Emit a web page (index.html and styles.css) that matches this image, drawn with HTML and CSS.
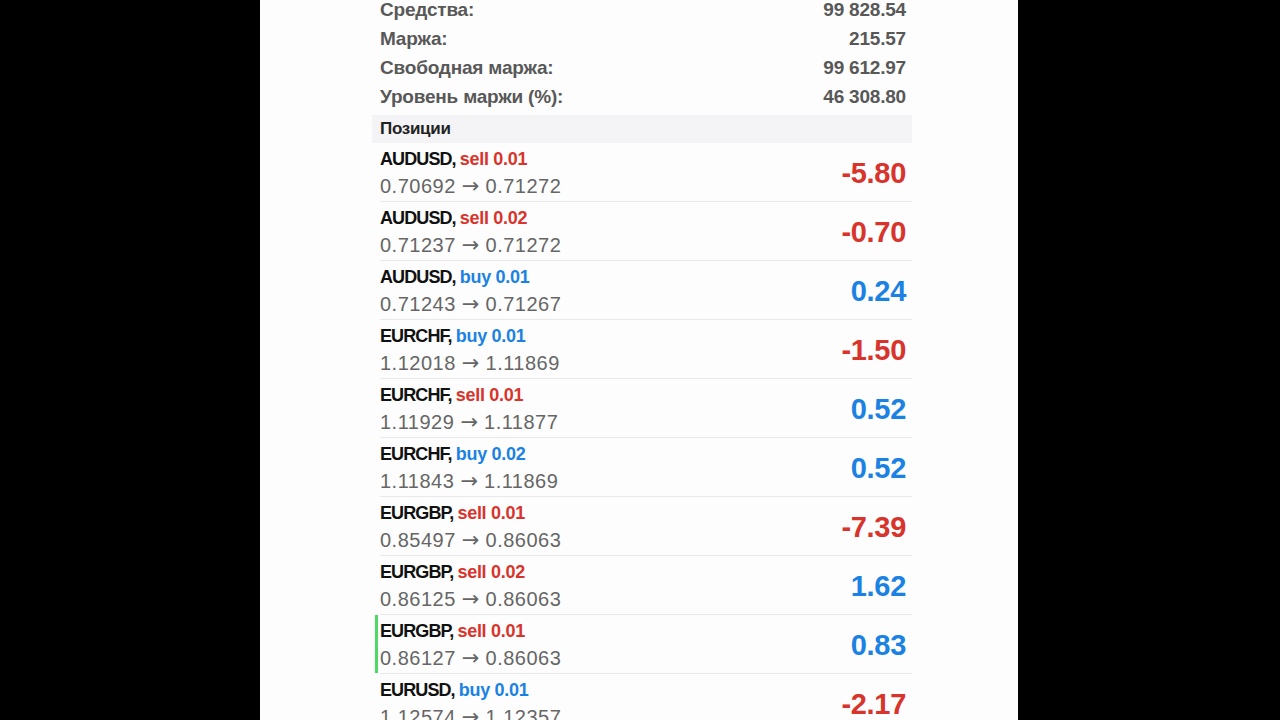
FILE: index.html
```html
<!DOCTYPE html>
<html lang="ru">
<head>
    <meta charset="UTF-8">
    <meta name="viewport" content="width=device-width, initial-scale=1.0">
    <title>Торговля</title>
    <link rel="stylesheet" href="styles.css">
</head>
<body>

    <div class="screen">

        <!-- Состояние счёта -->
        <div class="account">
            <div class="line"><span>Средства:</span><span>99 828.54</span></div>
            <div class="line"><span>Маржа:</span><span>215.57</span></div>
            <div class="line"><span>Свободная маржа:</span><span>99 612.97</span></div>
            <div class="line"><span>Уровень маржи (%):</span><span>46 308.80</span></div>
        </div>

        <div class="positions">
            <div class="section-title">Позиции</div>

            <div class="trade">
                <div class="trade-info">
                    <div class="trade-title">AUDUSD, <span class="sell">sell 0.01</span></div>
                    <div class="trade-prices">0.70692 <span class="arrow">→</span> 0.71272</div>
                </div>
                <div class="profit loss">-5.80</div>
            </div>

            <div class="trade">
                <div class="trade-info">
                    <div class="trade-title">AUDUSD, <span class="sell">sell 0.02</span></div>
                    <div class="trade-prices">0.71237 <span class="arrow">→</span> 0.71272</div>
                </div>
                <div class="profit loss">-0.70</div>
            </div>

            <div class="trade">
                <div class="trade-info">
                    <div class="trade-title">AUDUSD, <span class="buy">buy 0.01</span></div>
                    <div class="trade-prices">0.71243 <span class="arrow">→</span> 0.71267</div>
                </div>
                <div class="profit gain">0.24</div>
            </div>

            <div class="trade">
                <div class="trade-info">
                    <div class="trade-title">EURCHF, <span class="buy">buy 0.01</span></div>
                    <div class="trade-prices">1.12018 <span class="arrow">→</span> 1.11869</div>
                </div>
                <div class="profit loss">-1.50</div>
            </div>

            <div class="trade">
                <div class="trade-info">
                    <div class="trade-title">EURCHF, <span class="sell">sell 0.01</span></div>
                    <div class="trade-prices">1.11929 <span class="arrow">→</span> 1.11877</div>
                </div>
                <div class="profit gain">0.52</div>
            </div>

            <div class="trade">
                <div class="trade-info">
                    <div class="trade-title">EURCHF, <span class="buy">buy 0.02</span></div>
                    <div class="trade-prices">1.11843 <span class="arrow">→</span> 1.11869</div>
                </div>
                <div class="profit gain">0.52</div>
            </div>

            <div class="trade">
                <div class="trade-info">
                    <div class="trade-title">EURGBP, <span class="sell">sell 0.01</span></div>
                    <div class="trade-prices">0.85497 <span class="arrow">→</span> 0.86063</div>
                </div>
                <div class="profit loss">-7.39</div>
            </div>

            <div class="trade">
                <div class="trade-info">
                    <div class="trade-title">EURGBP, <span class="sell">sell 0.02</span></div>
                    <div class="trade-prices">0.86125 <span class="arrow">→</span> 0.86063</div>
                </div>
                <div class="profit gain">1.62</div>
            </div>

            <div class="trade selected">
                <div class="trade-info">
                    <div class="trade-title">EURGBP, <span class="sell">sell 0.01</span></div>
                    <div class="trade-prices">0.86127 <span class="arrow">→</span> 0.86063</div>
                </div>
                <div class="profit gain">0.83</div>
            </div>

            <div class="trade">
                <div class="trade-info">
                    <div class="trade-title">EURUSD, <span class="buy">buy 0.01</span></div>
                    <div class="trade-prices">1.12574 <span class="arrow">→</span> 1.12357</div>
                </div>
                <div class="profit loss">-2.17</div>
            </div>
        </div>

    </div>

</body>
</html>
```

FILE: styles.css
```css
body {
    background-color: #000;
    margin: 0;
    padding: 0;
    height: 100vh;
    overflow: hidden;
    font-family: "Liberation Sans", Arial, sans-serif;
}

.screen {
    width: 758px;
    height: 100vh;
    margin-left: 260px;
    background-color: #fdfdfd;
    padding-left: 112px;
    box-sizing: border-box;
    overflow: hidden;
}

/* Состояние счёта */
.account {
    width: 540px;
    margin-top: -5px;
}

.line {
    display: flex;
    justify-content: space-between;
    height: 29px;
    line-height: 29px;
    padding: 0 6px 0 8px;
    font-size: 19px;
    font-weight: bold;
    letter-spacing: -0.2px;
    color: #585858;
}

/* Позиции */
.positions {
    width: 540px;
    margin-top: 4px;
}

.section-title {
    height: 28px;
    line-height: 28px;
    padding-left: 8px;
    background-color: #f4f4f6;
    font-size: 17px;
    font-weight: bold;
    letter-spacing: -0.3px;
    color: #222;
}

.trade {
    position: relative;
    display: flex;
    justify-content: space-between;
    align-items: center;
    height: 58px;
    margin-left: 8px;
    padding-right: 6px;
    border-bottom: 1px solid #e9e9eb;
}

.trade.selected::before {
    content: "";
    position: absolute;
    left: -5px;
    top: 0;
    bottom: 0;
    width: 3px;
    background-color: #4cd964;
}

.trade-info {
    align-self: flex-start;
    padding-top: 4px;
}

.trade-title {
    line-height: 24px;
    font-size: 18px;
    font-weight: bold;
    letter-spacing: -0.9px;
    color: #111;
}

.trade-prices {
    line-height: 30px;
    font-size: 20px;
    letter-spacing: 0.5px;
    color: #666;
}

.arrow {
    font-family: "DejaVu Sans", sans-serif;
    font-size: 21px;
    letter-spacing: 0;
}

.sell {
    color: #d8342c;
    letter-spacing: -0.3px;
}

.buy {
    color: #1b82e3;
    letter-spacing: -0.3px;
}

.profit {
    padding-top: 3px;
    font-size: 29px;
    font-weight: bold;
    letter-spacing: -0.3px;
}

.profit.loss {
    color: #d8342c;
}

.profit.gain {
    color: #1b82e3;
}
```
